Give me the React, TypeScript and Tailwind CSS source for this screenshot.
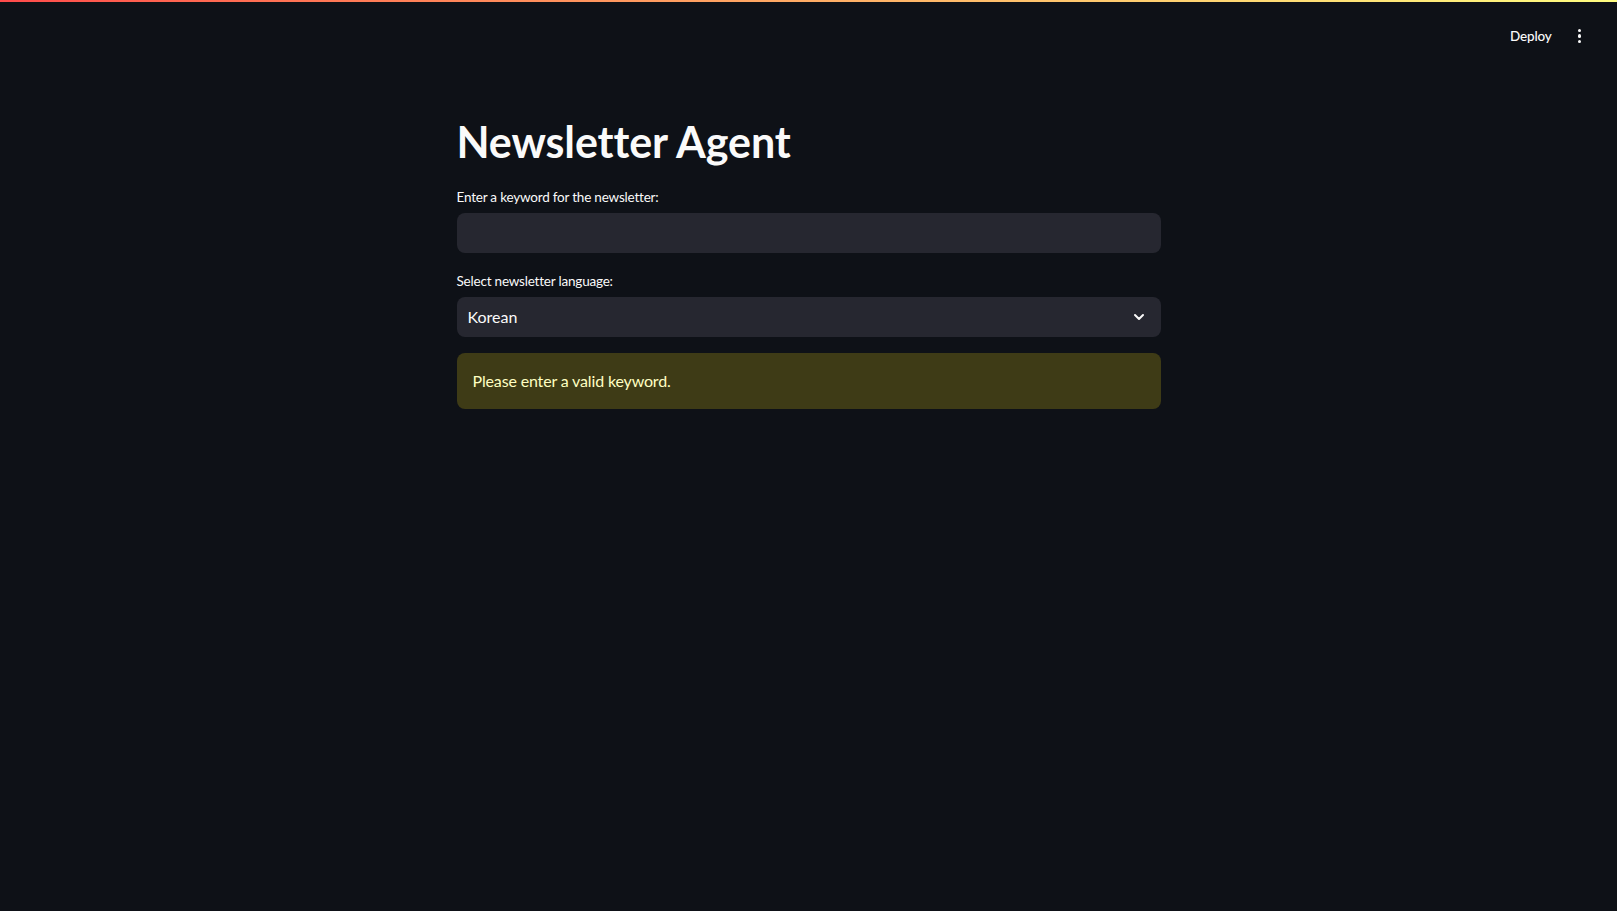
import { ChevronDown } from "lucide-react";

export default function App() {
  return (
    <div
      className="min-h-[911px] w-full bg-[#0e1117] text-[#fafafa]"
      style={{ fontFamily: "Lato, 'Noto Sans', sans-serif" }}
    >
      <div className="h-[2px] w-full bg-gradient-to-r from-[#ff4b4b] to-[#fffd80]" />

      <header className="flex h-[68px] items-center justify-end gap-[26px] pr-[36px]">
        <button className="text-[13.5px] font-medium tracking-[-0.2px] text-[#fafafa]">Deploy</button>
        <div className="flex flex-col items-center gap-[2px]">
          <span className="h-[3.5px] w-[3.5px] rounded-full bg-[#fafafa]" />
          <span className="h-[3.5px] w-[3.5px] rounded-full bg-[#fafafa]" />
          <span className="h-[3.5px] w-[3.5px] rounded-full bg-[#fafafa]" />
        </div>
      </header>

      <main className="mx-auto w-full max-w-[736px] px-4 pt-[45px]">
        <h1 className="text-[43px] font-bold leading-[53px] tracking-[-0.1px] text-[#fafafa]">
          Newsletter Agent
        </h1>

        <div className="mt-[17px]">
          <label className="mb-1 flex h-6 items-center text-[13.5px] tracking-[-0.2px] text-[#fafafa]">
            Enter a keyword for the newsletter:
          </label>
          <input
            type="text"
            className="h-10 w-full rounded-lg bg-[#262730] px-3 text-[16px] text-[#fafafa] outline-none"
          />
        </div>

        <div className="mt-4">
          <label className="mb-1 flex h-6 items-center text-[13.5px] tracking-[-0.2px] text-[#fafafa]">
            Select newsletter language:
          </label>
          <div className="flex h-10 w-full items-center justify-between rounded-lg bg-[#262730] pl-[11px] pr-[14px]">
            <span className="text-[16px] text-[#fafafa]">Korean</span>
            <ChevronDown size={16} strokeWidth={3} className="text-[#fafafa]" />
          </div>
        </div>

        <div className="mt-4 flex h-14 items-center rounded-lg bg-[#3e3b16] px-4 text-[16px] tracking-[-0.15px] text-[#ffffc2]">
          Please enter a valid keyword.
        </div>
      </main>
    </div>
  );
}
